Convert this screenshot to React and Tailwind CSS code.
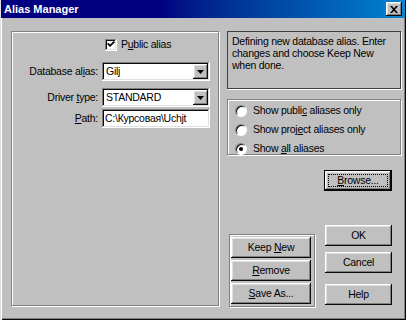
import React from "react";

const raised =
  "shadow-[inset_-1px_-1px_#0a0a0a,inset_1px_1px_#ffffff,inset_-2px_-2px_#808080,inset_2px_2px_#dfdfdf]";
const sunken =
  "shadow-[inset_-1px_-1px_#ffffff,inset_1px_1px_#808080,inset_-2px_-2px_#dfdfdf,inset_2px_2px_#0a0a0a]";
const etched = "border border-[#808080] shadow-[1px_1px_0_#ffffff,inset_1px_1px_0_#ffffff]";

const U = ({ children }) => <span className="underline underline-offset-1">{children}</span>;

function Button({ children, className = "", isDefault = false }) {
  if (isDefault) {
    return (
      <div className={`border border-black bg-[#c0c0c0] ${className}`}>
        <div className={`h-full w-full flex items-center justify-center p-[3px] ${raised}`}>
          <div className="h-full w-full flex items-center justify-center border border-dotted border-black">
            {children}
          </div>
        </div>
      </div>
    );
  }
  return (
    <div className={`flex items-center justify-center bg-[#c0c0c0] ${raised} ${className}`}>
      {children}
    </div>
  );
}

function Combo({ value }) {
  return (
    <div className={`relative w-[108px] h-[19px] bg-white flex items-center pl-[4px] ${sunken}`}>
      <span>{value}</span>
      <div className={`absolute right-[2px] top-[2px] bottom-[2px] w-[15px] bg-[#c0c0c0] flex items-center justify-center ${raised}`}>
        <svg width="7" height="4" viewBox="0 0 7 4">
          <path d="M0 0h7L3.5 4z" fill="#000" />
        </svg>
      </div>
    </div>
  );
}

function Radio({ checked, children }) {
  return (
    <div className="flex items-center h-[19px]">
      <div className="relative w-[12px] h-[12px] rounded-full bg-white border border-t-[#808080] border-l-[#808080] border-b-[#ffffff] border-r-[#ffffff] shadow-[inset_1px_1px_0_#0a0a0a]">
        {checked && <div className="absolute left-[3px] top-[3px] w-[4px] h-[4px] rounded-full bg-black" />}
      </div>
      <span className="ml-[6px]">{children}</span>
    </div>
  );
}

export default function App() {
  return (
    <div className="w-[406px] h-[320px] bg-[#c0c0c0] relative text-[10.5px] tracking-[-0.25px] leading-[13px] text-black font-['Liberation_Sans',Arial,sans-serif] shadow-[inset_1px_0_#dfdfdf,inset_2px_0_#ffffff,inset_-1px_-1px_#0a0a0a,inset_-2px_-2px_#808080] overflow-hidden">
      {/* Title bar */}
      <div className="h-[18px] mx-[1px] flex items-center justify-between pl-[3px] pr-[3px] bg-gradient-to-r from-[#000080] from-40% to-[#1084d0]">
        <span className="text-white font-bold text-[11px] tracking-normal">Alias Manager</span>
        <Button className="w-[16px] h-[14px]">
          <svg width="8" height="7" viewBox="0 0 8 7">
            <path d="M0 0h2l2 2.3L6 0h2L5 3.5 8 7H6L4 4.7 2 7H0l3-3.5z" fill="#000" />
          </svg>
        </Button>
      </div>

      <div className="flex pl-[11px] pt-[13px]">
        {/* Left group */}
        <div className={`w-[208px] h-[275px] ${etched} flex flex-col`}>
          <div className="flex items-center ml-[93px] mt-[6px] h-[13px]">
            <div className={`w-[12px] h-[12px] bg-white flex items-center justify-center ${sunken}`}>
              <svg width="8" height="7" viewBox="0 0 8 7">
                <path d="M0 3l1.2-1.2L3 3.6 6.8 0 8 1.2 3 6z" fill="#000" />
              </svg>
            </div>
            <span className="ml-[4px]">
              P<U>u</U>blic alias
            </span>
          </div>

          <div className="flex items-center mt-[11px]">
            <span className="w-[90px] text-right pr-[4px]">
              Database al<U>i</U>as:
            </span>
            <Combo value="Gilj" />
          </div>
          <div className="flex items-center mt-[7px]">
            <span className="w-[90px] text-right pr-[4px]">
              Driver <U>t</U>ype:
            </span>
            <Combo value="STANDARD" />
          </div>
          <div className="flex items-center mt-[2px]">
            <span className="w-[90px] text-right pr-[4px]">
              <U>P</U>ath:
            </span>
            <div className={`w-[108px] h-[19px] bg-white flex items-center pl-[3px] ${sunken}`}>
              C:\Курсовая\Uchjt
            </div>
          </div>
        </div>

        {/* Right column */}
        <div className="ml-[8px] w-[174px] flex flex-col">
          <div className="h-[58px] border border-[#404040] shadow-[1px_1px_0_#ffffff] px-[4px] pt-[3px] leading-[12px]">
            Defining new database alias. Enter changes and choose Keep New when done.
          </div>

          <div className={`mt-[10px] h-[56px] ${etched} pl-[7px] pt-[1px]`}>
            <Radio>
              Show publi<U>c</U> aliases only
            </Radio>
            <Radio>
              Show proj<U>e</U>ct aliases only
            </Radio>
            <Radio checked>
              Show <U>a</U>ll aliases
            </Radio>
          </div>

          <div className="flex mt-[15px] pl-[97px]">
            <Button isDefault className="w-[68px] h-[21px]">
              <span>
                <U>B</U>rowse...
              </span>
            </Button>
          </div>

          <div className="flex mt-[34px]">
            <div className={`mt-[9px] ml-[2px] w-[86px] h-[73px] ${etched} flex flex-col gap-[2px] pt-[2px] pl-[1px]`}>
              <Button className="w-[80px] h-[21px]">
                <span>
                  Keep <U>N</U>ew
                </span>
              </Button>
              <Button className="w-[80px] h-[21px]">
                <span>
                  <U>R</U>emove
                </span>
              </Button>
              <Button className="w-[80px] h-[21px]">
                <span>
                  <U>S</U>ave As...
                </span>
              </Button>
            </div>
            <div className="ml-[10px] flex flex-col">
              <Button className="w-[67px] h-[21px]">OK</Button>
              <Button className="w-[67px] h-[21px] mt-[6px]">Cancel</Button>
              <Button className="w-[67px] h-[21px] mt-[11px]">Help</Button>
            </div>
          </div>
        </div>
      </div>
    </div>
  );
}
